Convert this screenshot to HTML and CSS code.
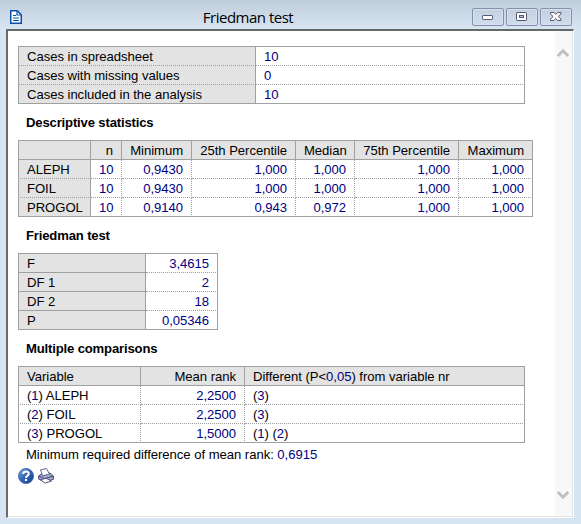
FILE: index.html
```html
<!DOCTYPE html>
<html lang="en">
<head>
<meta charset="utf-8">
<title>Friedman test</title>
<link rel="stylesheet" href="styles.css">
</head>
<body>
<div class="window">
  <header class="titlebar">
    <svg class="doc" width="12" height="14" viewBox="0 0 12 14"><path d="M.75.75H7.3L11.25 4.7V13.25H.75Z" fill="#fff" stroke="#0a50a8" stroke-width="1.5"/><path d="M7 1V5H11" fill="none" stroke="#0a50a8" stroke-width="1.2"/><path d="M3 5.5H6M3 8H9M3 10.5H9" stroke="#0a50a8"/></svg>
    <h1>Friedman test</h1>
    <div class="controls">
      <button aria-label="Minimize"><svg width="12" height="12" viewBox="0 0 12 12"><rect x=".5" y="4.5" width="10" height="4" rx=".7" fill="#fff" stroke="#515870"/></svg></button>
      <button aria-label="Maximize"><svg width="12" height="12" viewBox="0 0 12 12"><rect x=".5" y="1.5" width="10" height="8" rx=".7" fill="#fff" stroke="#515870"/><rect x="3.5" y="4.5" width="4" height="2" fill="#b9c7d8" stroke="#515870"/></svg></button>
      <button aria-label="Close"><svg width="12" height="12" viewBox="0 0 12 12"><path d="M.5 1.5H4L5.75 3.5 7.5 1.5H11V3L8.3 5.5 11 8V9.5H7.5L5.75 7.5 4 9.5H.5V8L3.2 5.5.5 3Z" fill="#fff" stroke="#515870"/></svg></button>
    </div>
  </header>
  <div class="pane">
    <main class="report">
      <table class="summary">
        <colgroup><col class="w238"><col class="w269"></colgroup>
        <tr><th>Cases in spreadsheet</th><td>10</td></tr>
        <tr><th>Cases with missing values</th><td>0</td></tr>
        <tr><th>Cases included in the analysis</th><td>10</td></tr>
      </table>
      <h2>Descriptive statistics</h2>
      <table class="stats">
        <colgroup><col class="w73"><col class="w31"><col class="w70"><col class="w104"><col class="w59"><col class="w104"><col class="w74"></colgroup>
        <tr class="head"><th></th><th>n</th><th>Minimum</th><th>25th Percentile</th><th>Median</th><th>75th Percentile</th><th>Maximum</th></tr>
        <tr><th>ALEPH</th><td>10</td><td>0,9430</td><td>1,000</td><td>1,000</td><td>1,000</td><td>1,000</td></tr>
        <tr><th>FOIL</th><td>10</td><td>0,9430</td><td>1,000</td><td>1,000</td><td>1,000</td><td>1,000</td></tr>
        <tr><th>PROGOL</th><td>10</td><td>0,9140</td><td>0,943</td><td>0,972</td><td>1,000</td><td>1,000</td></tr>
      </table>
      <h2>Friedman test</h2>
      <table class="test">
        <colgroup><col class="w128"><col class="w72"></colgroup>
        <tr><th>F</th><td>3,4615</td></tr>
        <tr><th>DF 1</th><td>2</td></tr>
        <tr><th>DF 2</th><td>18</td></tr>
        <tr><th>P</th><td>0,05346</td></tr>
      </table>
      <h2>Multiple comparisons</h2>
      <table class="comparisons">
        <colgroup><col class="w123"><col class="w104"><col class="w280"></colgroup>
        <tr class="head"><th>Variable</th><th>Mean rank</th><th>Different (P&lt;<b>0,05</b>) from variable nr</th></tr>
        <tr><td>(<b>1</b>) ALEPH</td><td><b>2,2500</b></td><td>(<b>3</b>)</td></tr>
        <tr><td>(<b>2</b>) FOIL</td><td><b>2,2500</b></td><td>(<b>3</b>)</td></tr>
        <tr><td>(<b>3</b>) PROGOL</td><td><b>1,5000</b></td><td>(<b>1</b>) (<b>2</b>)</td></tr>
      </table>
      <p class="note">Minimum required difference of mean rank: <b>0,6915</b></p>
      <div class="tools">
        <svg width="16" height="16" viewBox="0 0 16 16"><defs><linearGradient id="g" x1="0" y1="0" x2="1" y2="1"><stop offset="0" stop-color="#7fa9df"/><stop offset=".5" stop-color="#2f64b4"/><stop offset="1" stop-color="#163f8e"/></linearGradient></defs><circle cx="8" cy="8" r="7.6" fill="url(#g)" stroke="#2a58a4" stroke-width=".7"/><path d="M5.2 6C5.2 2.6 10.8 2.6 10.8 5.7 10.8 7.7 8 7.6 8 10" fill="none" stroke="#fff" stroke-width="2"/><rect x="6.9" y="11" width="2.2" height="2" fill="#fff"/></svg>
        <svg width="16" height="16" viewBox="0 0 16 16"><path d="M.6 8 4 5.5 12 5 15.4 8V11.3L6.5 14 .6 11Z" fill="#a9add0" stroke="#45476f"/><path d="M.8 8.2 6.5 10.6 15.3 8.2" fill="none" stroke="#45476f"/><path d="M2.5 1.8 8.5.6 11.5 6 4.6 8Z" fill="#fff" stroke="#53558a" stroke-width=".9"/><path d="M2.5 11.8 7 15.2 13.5 13 8 10.3Z" fill="#fff" stroke="#45476f" stroke-width=".9"/><rect x="12" y="6.6" width="2" height="1.4" fill="#48b548"/></svg>
      </div>
    </main>
    <div class="scrollbar">
      <svg width="12" height="10" viewBox="0 0 12 10"><path d="M.8 8 6 2.8 11.2 8" fill="none" stroke="#bfbfbf" stroke-width="2.8"/></svg>
      <svg width="12" height="10" viewBox="0 0 12 10"><path d="M.8 2 6 7.2 11.2 2" fill="none" stroke="#bfbfbf" stroke-width="2.8"/></svg>
    </div>
  </div>
</div>
</body>
</html>
```
FILE: styles.css
```css
* { box-sizing: border-box; }
body { margin: 0; overflow: hidden; font: 13.1px/18px "Liberation Sans", Arial, sans-serif; letter-spacing: -0.04px; color: #000; }
.window { display: flex; flex-direction: column; height: 524px; padding: 0 7px 6px 6px; background: linear-gradient(#bfccda, #d7e4f2 29px); }
.titlebar { display: grid; grid-template-columns: 100px 1fr 180px; height: 29px; flex: none; margin-right: 2px; }
.doc { margin: 10px 0 0 4px; }
h1 { margin: 6px 0 0 -2px; font: 15px/22px "Open Sans", "Segoe UI", sans-serif; letter-spacing: -0.5px; text-align: center; }
.controls { display: flex; gap: 2px; padding-top: 8px; justify-content: flex-end; }
.controls button { display: flex; align-items: center; justify-content: center; flex: none; width: 32px; height: 18px; padding: 0; border: 1px solid #8391ad; border-radius: 2px; background: linear-gradient(#c4d0de, #d0ddea); box-shadow: inset 0 0 0 1px #d5e1ef; }
.pane { display: flex; flex: 1; width: 568px; border-style: solid; border-width: 2px 1px 1px 2px; border-color: #646a68 #fff #fff #696969; background: #fff; box-shadow: inset -1px -1px #e3e3e3; }
.report { flex: 1; padding: 15px 0 0 10px; }
table { table-layout: fixed; border-collapse: separate; border-spacing: 0; border-top: 1px solid #a0a0a0; }
th, td { height: 19px; padding: 1px 8px 0; line-height: 17px; border-right: 1px solid #a0a0a0; border-bottom: 1px dotted #a0a0a0; text-align: left; font-weight: normal; white-space: nowrap; }
th { background: #e3e3e3; }
th:first-child, td:first-child { border-left: 1px solid #a0a0a0; }
tr:last-child > *, .head > * { border-bottom-style: solid; }
td, b { color: #000080; font-weight: normal; }
.summary { width: 507px; }
.stats { width: 515px; }
.stats th + th, .stats td, .test td, .comparisons td:nth-child(2), .comparisons th:nth-child(2) { text-align: right; }
.stats td:not(:last-child), .comparisons td:not(:last-child) { border-right-style: dotted; }
.test { width: 200px; }
.test th { border-bottom-style: solid; }
.comparisons { width: 507px; }
.comparisons td { color: #000; }
.w238 { width: 238px; } .w269 { width: 269px; } .w73 { width: 73px; } .w31 { width: 31px; }
.w70 { width: 70px; } .w104 { width: 104px; } .w59 { width: 59px; } .w74 { width: 74px; }
.w128 { width: 128px; } .w72 { width: 72px; } .w123 { width: 123px; } .w280 { width: 280px; }
h2 { margin: 10px 0 8px 8px; font-size: 13.1px; font-weight: bold; line-height: 18px; letter-spacing: -0.16px; }
.note { margin: 3px 0 0 8px; line-height: 18px; }
.tools { display: flex; gap: 4px; padding-top: 4px; }
.scrollbar { display: flex; flex-direction: column; justify-content: space-between; align-items: center; width: 18px; margin-bottom: 1px; padding: 17px 1px 16px 0; background: #f8f8f8; border-right: 1px solid #e3e3e3; }
```
